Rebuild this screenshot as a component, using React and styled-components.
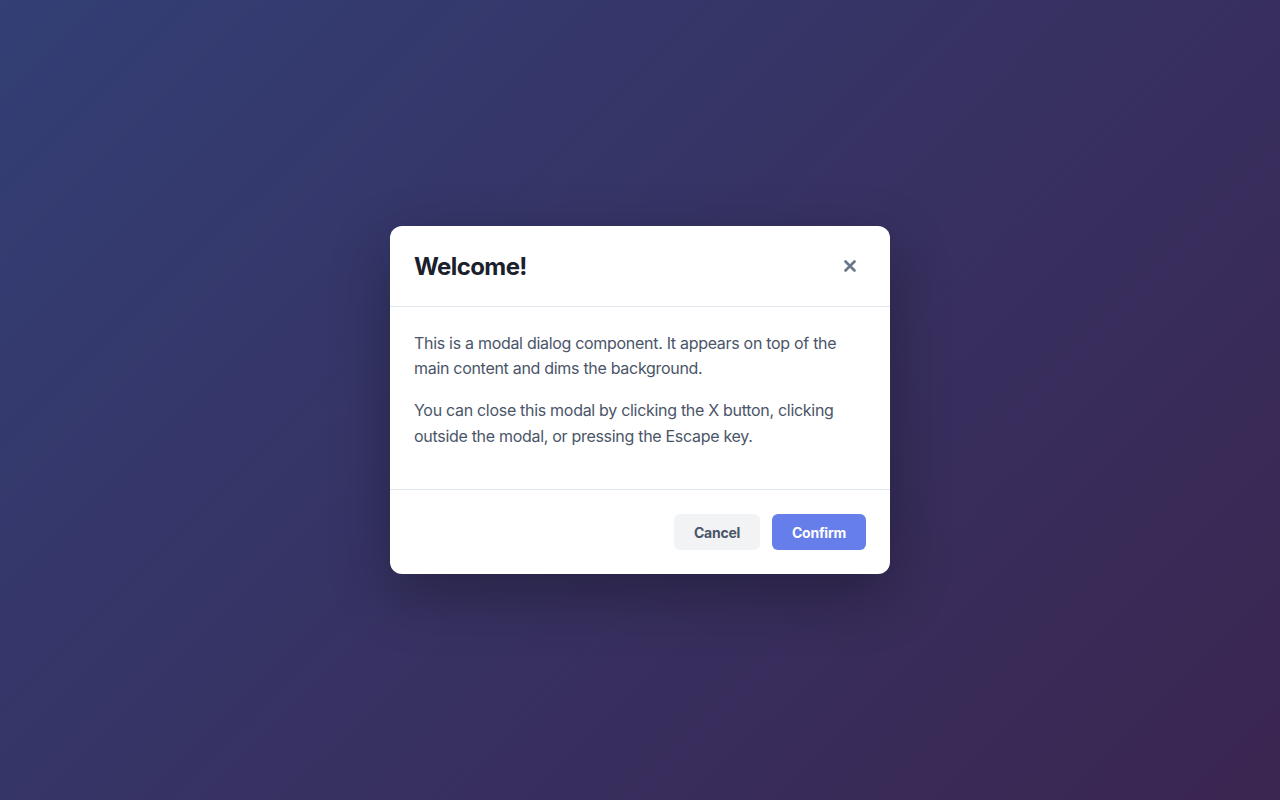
import styled, { createGlobalStyle } from "styled-components";

const GlobalStyle = createGlobalStyle`
	html, body {
		margin: 0;
		padding: 0;
		height: 100%;
	}
	body {
		font-family: Inter, "Liberation Sans", sans-serif;
		-webkit-font-smoothing: antialiased;
	}
	#root {
		height: 100%;
	}
`

const Page = styled.div`
	position: relative;
	height: 100vh;
	background: linear-gradient(135deg, #667eea 0%, #764ba2 100%);
`

const Overlay = styled.div`
	position: absolute;
	inset: 0;
	display: flex;
	align-items: center;
	justify-content: center;
	background: rgba(0, 0, 0, 0.5);
`

const Modal = styled.div`
	width: 500px;
	background: #fff;
	border-radius: 12px;
	box-shadow: 0 20px 60px rgba(0, 0, 0, 0.3);
	overflow: hidden;
`

const Header = styled.div`
	display: flex;
	align-items: center;
	justify-content: space-between;
	padding: 24px;
	border-bottom: 1px solid #e2e8f0;
`

const Title = styled.h2`
	margin: 0;
	padding-top: 2px;
	font-size: 24px;
	line-height: 29px;
	font-weight: 700;
	letter-spacing: -0.6px;
	color: #1a202c;
`

const CloseButton = styled.button`
	display: flex;
	align-items: center;
	justify-content: center;
	width: 32px;
	height: 32px;
	padding: 0;
	border: none;
	border-radius: 6px;
	background: transparent;
	color: #6b7588;
	cursor: pointer;
`

const Body = styled.div`
	padding: 24px;
	border-bottom: 1px solid #e2e8f0;
`

const Text = styled.p`
	margin: 0 0 16px;
	font-size: 16px;
	line-height: 1.6;
	letter-spacing: -0.3px;
	color: #4a5568;
`

const Footer = styled.div`
	display: flex;
	justify-content: flex-end;
	gap: 12px;
	padding: 24px;
`

const Button = styled.button`
	height: 36px;
	padding: 0 20px;
	border: none;
	border-radius: 6px;
	font-family: inherit;
	font-size: 14px;
	font-weight: 700;
	letter-spacing: -0.25px;
	background: ${p => p.$primary ? "#667eea" : "#f1f3f5"};
	color: ${p => p.$primary ? "#fff" : "#4a5568"};
	cursor: pointer;
`

const App = () => {
	return (
		<>
			<GlobalStyle />
			<Page>
				<Overlay>
					<Modal>
						<Header>
							<Title>Welcome!</Title>
							<CloseButton aria-label="Close">
								<svg width="12" height="12" viewBox="0 0 12 12">
									<path d="M1.5 1.5 L10.5 10.5 M10.5 1.5 L1.5 10.5" stroke="currentColor" strokeWidth="2.6" strokeLinecap="round" />
								</svg>
							</CloseButton>
						</Header>
						<Body>
							<Text>
								This is a modal dialog component. It appears on top of the main content and dims the background.
							</Text>
							<Text>
								You can close this modal by clicking the X button, clicking outside the modal, or pressing the Escape key.
							</Text>
						</Body>
						<Footer>
							<Button>Cancel</Button>
							<Button $primary>Confirm</Button>
						</Footer>
					</Modal>
				</Overlay>
			</Page>
		</>
	);
}

export default App;
